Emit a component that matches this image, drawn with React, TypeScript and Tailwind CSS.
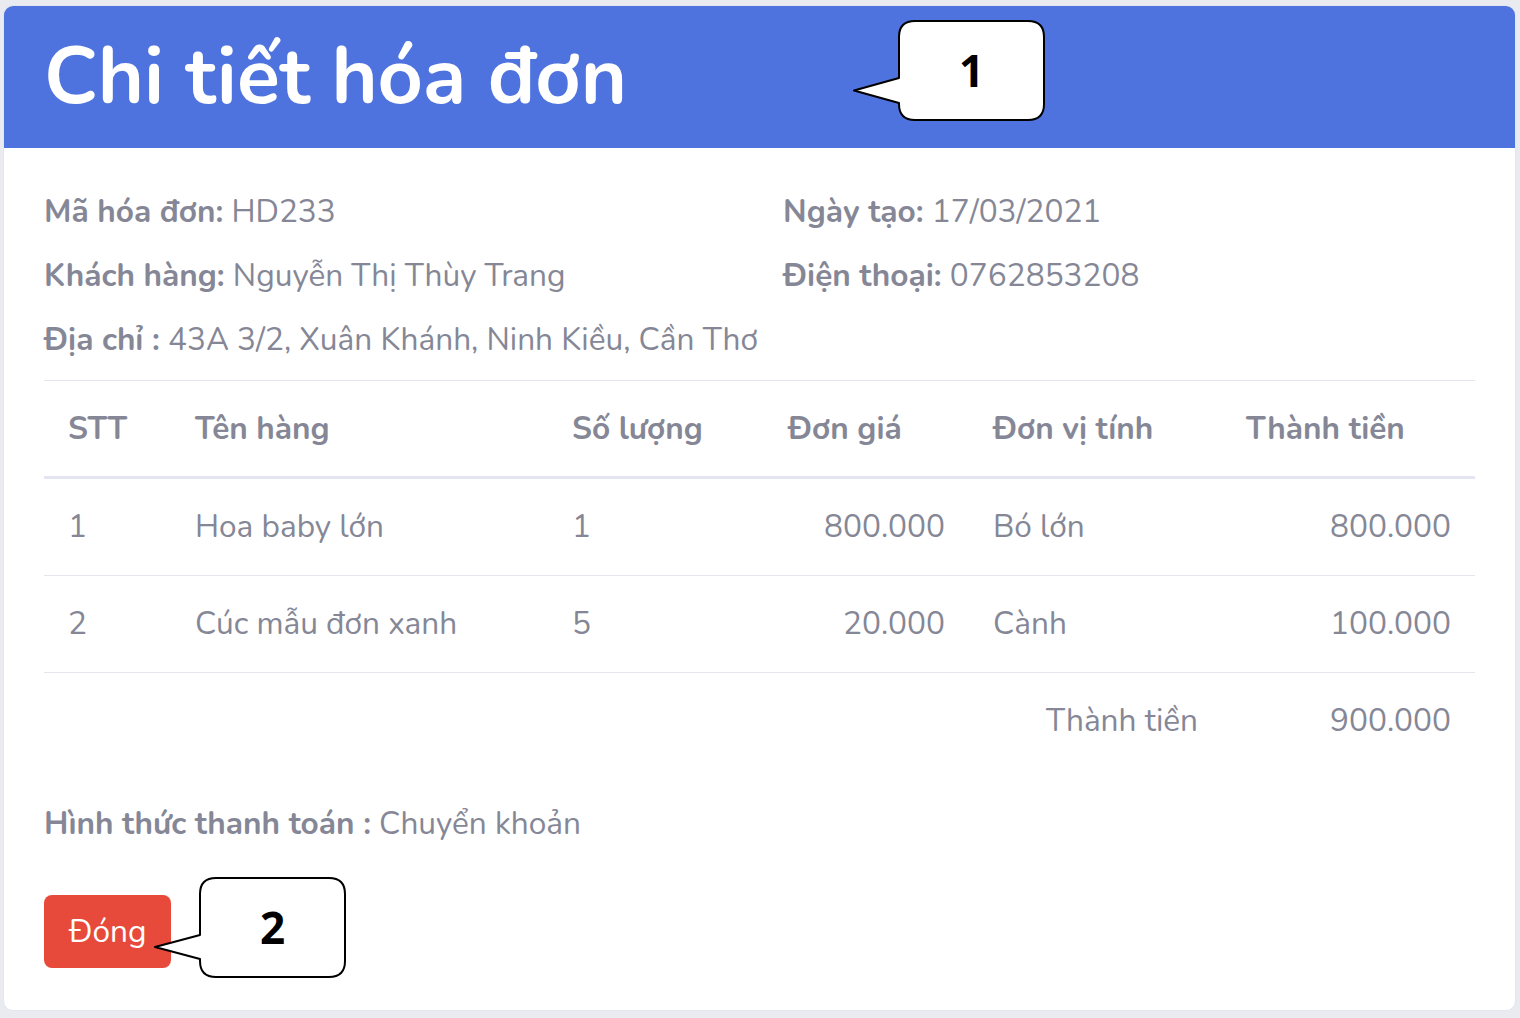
import React from "react";

const rows = [
  { stt: "1", name: "Hoa baby lớn", qty: "1", price: "800.000", unit: "Bó lớn", total: "800.000" },
  { stt: "2", name: "Cúc mẫu đơn xanh", qty: "5", price: "20.000", unit: "Cành", total: "100.000" },
];

function Callout({ tailTop, tailBottom, label }: { tailTop: number; tailBottom: number; label: string }) {
  const x0 = 46;
  const w = 145;
  const h = 100;
  const r = 16;
  const tipY = (tailTop + tailBottom) / 2;
  const d = `M ${x0 + r} 1 H ${x0 + w - r} Q ${x0 + w} 1 ${x0 + w} ${1 + r} V ${h - r} Q ${x0 + w} ${h} ${x0 + w - r} ${h} H ${x0 + r} Q ${x0} ${h} ${x0} ${h - r} V ${tailBottom} L 1 ${tipY} L ${x0} ${tailTop} V ${1 + r} Q ${x0} 1 ${x0 + r} 1 Z`;
  return (
    <div className="relative w-[194px] h-[102px]">
      <svg width="194" height="102" viewBox="0 0 194 102" className="absolute inset-0">
        <path d={d} fill="#ffffff" stroke="#000000" strokeWidth="2" strokeLinejoin="round" />
      </svg>
      <div className="absolute left-[46px] top-0 w-[145px] h-[100px] flex items-center justify-center text-[44px] font-bold text-black leading-none" style={{ fontFamily: '"Open Sans", "Liberation Sans", sans-serif' }}>
        {label}
      </div>
    </div>
  );
}

export default function App() {
  const font = { fontFamily: 'Nunito, Lato, "Noto Sans", sans-serif' };
  return (
    <div className="w-[1520px] h-[1018px] bg-[#eaebf1] pt-[5px] pl-[3px]" style={font}>
      <div className="relative w-[1513px] h-[1006px] bg-white rounded-[10px] border border-[#e3e6f0] overflow-hidden">
        <div className="bg-[#4e73df] h-[142px] px-[40px] flex items-center">
          <h1 className="text-white text-[79px] font-bold leading-[1.2]">Chi tiết hóa đơn</h1>
        </div>
        <div className="px-[40px] pt-[40px] text-[#858796] text-[31.6px] leading-[48px]">
          <div className="grid grid-cols-[739px_1fr]">
            <p className="mb-4"><b className="font-bold">Mã hóa đơn:</b> HD233</p>
            <p className="mb-4"><b className="font-bold">Ngày tạo:</b> 17/03/2021</p>
            <p className="mb-4"><b className="font-bold">Khách hàng:</b> Nguyễn Thị Thùy Trang</p>
            <p className="mb-4"><b className="font-bold">Điện thoại:</b> 0762853208</p>
          </div>
          <p className="mb-4"><b className="font-bold">Địa chỉ :</b> 43A 3/2, Xuân Khánh, Ninh Kiều, Cần Thơ</p>
          <table className="w-[1431px] table-fixed border-collapse mb-[32px]">
            <colgroup>
              <col className="w-[127px]" />
              <col className="w-[377px]" />
              <col className="w-[216px]" />
              <col className="w-[205px]" />
              <col className="w-[253px]" />
              <col className="w-[253px]" />
            </colgroup>
            <thead>
              <tr className="border-t border-[#e3e6f0] border-b-[3px] border-b-[#e3e6f0]">
                <th className="text-left font-bold px-[24px] pt-[24px] pb-[23px]">STT</th>
                <th className="text-left font-bold px-[24px] pt-[24px] pb-[23px]">Tên hàng</th>
                <th className="text-left font-bold px-[24px] pt-[24px] pb-[23px]">Số lượng</th>
                <th className="text-left font-bold px-[24px] pt-[24px] pb-[23px]">Đơn giá</th>
                <th className="text-left font-bold px-[24px] pt-[24px] pb-[23px]">Đơn vị tính</th>
                <th className="text-left font-bold px-[24px] pt-[24px] pb-[23px]">Thành tiền</th>
              </tr>
            </thead>
            <tbody>
              {rows.map((r) => (
                <tr key={r.stt} className="border-b border-[#e3e6f0]">
                  <td className="px-[24px] pt-[24px] pb-[24px]">{r.stt}</td>
                  <td className="px-[24px] pt-[24px] pb-[24px]">{r.name}</td>
                  <td className="px-[24px] pt-[24px] pb-[24px]">{r.qty}</td>
                  <td className="px-[24px] pt-[24px] pb-[24px] text-right">{r.price}</td>
                  <td className="px-[24px] pt-[24px] pb-[24px]">{r.unit}</td>
                  <td className="px-[24px] pt-[24px] pb-[24px] text-right">{r.total}</td>
                </tr>
              ))}
              <tr>
                <td className="px-[24px] pt-[24px] pb-[23px]"></td>
                <td className="px-[24px] pt-[24px] pb-[23px]"></td>
                <td className="px-[24px] pt-[24px] pb-[23px]"></td>
                <td className="px-[24px] pt-[24px] pb-[23px]"></td>
                <td className="px-[24px] pt-[24px] pb-[23px] text-right">Thành tiền</td>
                <td className="px-[24px] pt-[24px] pb-[23px] text-right">900.000</td>
              </tr>
            </tbody>
          </table>
          <p className="mb-[47px]"><b className="font-bold">Hình thức thanh toán :</b> Chuyển khoản</p>
          <button className="bg-[#e74a3b] text-white rounded-[8px] px-[25px] h-[73px] text-[31.6px] leading-[48px]">Đóng</button>
        </div>
        <div className="absolute left-[849px] top-[14px]">
          <Callout tailTop={58} tailBottom={83} label="1" />
        </div>
        <div className="absolute left-[150px] top-[871px]">
          <Callout tailTop={58} tailBottom={82} label="2" />
        </div>
      </div>
    </div>
  );
}
